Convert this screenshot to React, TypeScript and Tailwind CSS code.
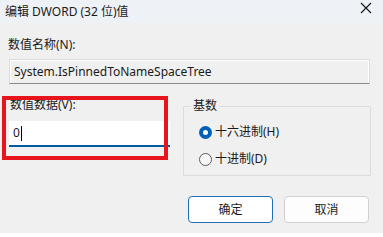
import React from "react";

const font = { fontFamily: '"Noto Sans", "Noto Sans CJK SC", sans-serif' };

function Radio({ checked, label }: { checked?: boolean; label: string }) {
  return (
    <div className="flex items-center h-[16px]">
      {checked ? (
        <div className="w-[13px] h-[13px] rounded-full bg-[#005fb8] flex items-center justify-center">
          <div className="w-[5px] h-[5px] rounded-full bg-white" />
        </div>
      ) : (
        <div className="w-[13px] h-[13px] rounded-full border border-[#5d5d5d] bg-[#f7f7f7]" />
      )}
      <span className="ml-[3px] text-[12px] leading-[16px] text-[#1a1a1a]">{label}</span>
    </div>
  );
}

export default function App() {
  return (
    <div className="relative w-[383px] h-[237px] bg-[#f0f0f0] flex flex-col overflow-hidden" style={font}>
      {/* Title bar */}
      <div className="h-[23px] bg-[#eef2f7] flex items-center justify-between pl-[5px] pr-[11px] shrink-0">
        <span className="text-[12px] leading-[16px] text-[#1a1a1a]">编辑 DWORD (32 位)值</span>
        <svg width="12" height="12" viewBox="0 0 12 12" className="-mt-[8px]">
          <path d="M1 1 L11 11 M11 1 L1 11" stroke="#1a1a1a" strokeWidth="1.2" />
        </svg>
      </div>

      <div className="flex-1 flex flex-col">
        <div className="mt-[14px] ml-[8px] text-[12px] leading-[16px] text-[#1a1a1a]">数值名称(N):</div>

        {/* Name field */}
        <div className="mt-[6px] ml-[9px] w-[361px] h-[25px] border border-[#dcdcdc] border-b-[#8a8a8a] bg-[#f0f0f0]">
          <div className="h-full border border-white border-b-0 flex items-center pl-[3px] text-[12px] text-[#1a1a1a]">
            System.IsPinnedToNameSpaceTree
          </div>
        </div>

        <div className="flex">
          {/* Value data */}
          <div className="ml-[9px] w-[161px] flex flex-col">
            <div className="mt-[13px] ml-[1px] text-[12px] leading-[16px] text-[#1a1a1a]">数值数据(V):</div>
            <div className="mt-[8px] h-[26px] bg-white border-b-2 border-[#005a9e] flex items-center pl-[4px] text-[12px] text-[#1a1a1a]">
              <span>0</span>
              <span className="ml-[1px] w-[1px] h-[15px] bg-black" />
            </div>
          </div>

          {/* Base group */}
          <div className="ml-[13px] mt-[22px] w-[188px] h-[70px] border border-[#dcdcdc] rounded-[1px] relative flex flex-col pl-[15px] pt-[17px] gap-[11px]">
            <span className="absolute -top-[9px] left-[7px] px-[2px] bg-[#f0f0f0] text-[12px] leading-[16px] text-[#1a1a1a]">
              基数
            </span>
            <Radio checked label="十六进制(H)" />
            <Radio label="十进制(D)" />
          </div>
        </div>

        {/* Buttons */}
        <div className="mt-[20px] flex justify-end pr-[14px] gap-[11px]">
          <button className="w-[85px] h-[27px] rounded-[4px] bg-white border border-[#1d6fb8] text-[12px] text-[#1a1a1a]">
            确定
          </button>
          <button className="w-[85px] h-[27px] rounded-[4px] bg-[#fdfdfd] border border-[#d0d0d0] text-[12px] text-[#1a1a1a]">
            取消
          </button>
        </div>
      </div>

      <div className="h-[4px] bg-white shrink-0" />

      {/* Red highlight annotation */}
      <div className="absolute left-[2px] top-[96px] w-[166px] h-[64px] border-4 border-[#e8141b] pointer-events-none" />
    </div>
  );
}
